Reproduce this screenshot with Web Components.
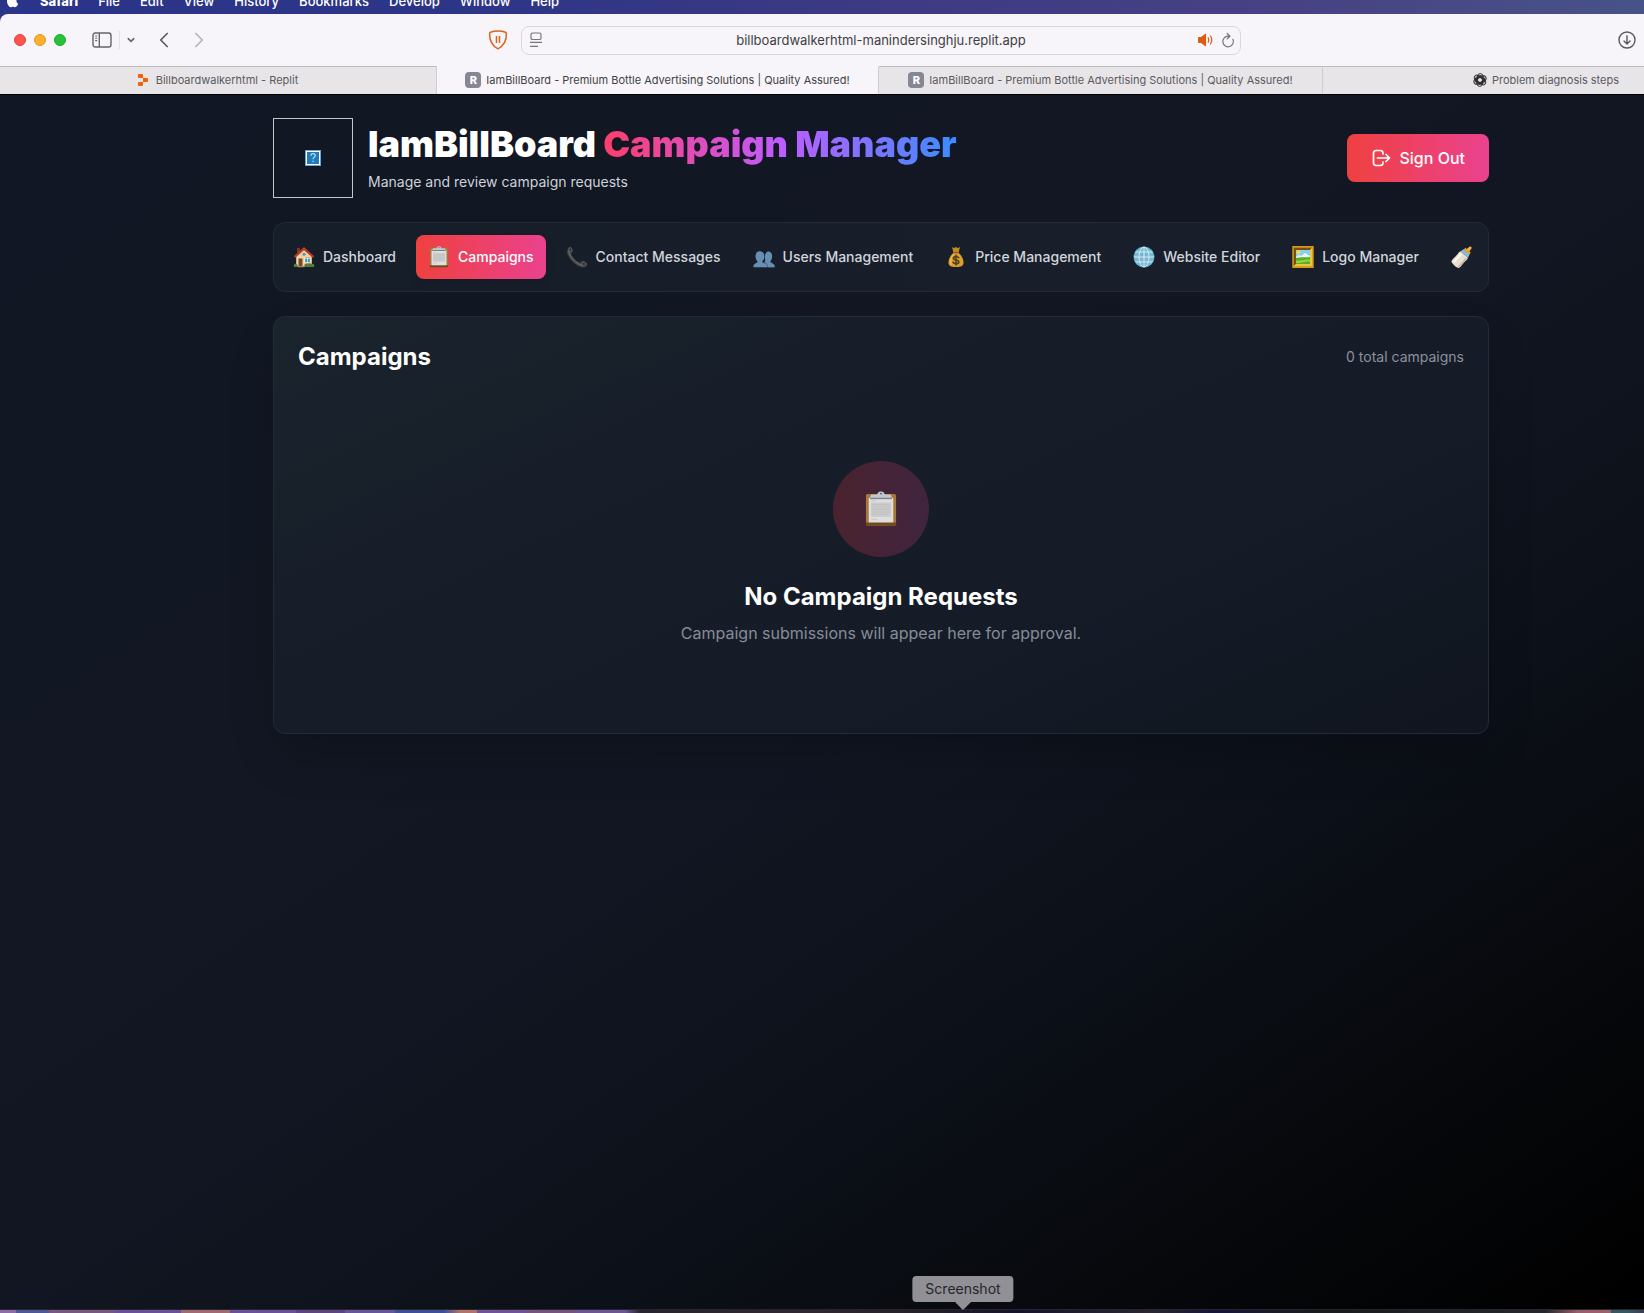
<!DOCTYPE html>
<html lang="en">
<head>
<meta charset="utf-8">
<meta name="viewport" content="width=device-width, initial-scale=1">
<title>IamBillBoard - Campaign Manager</title>
<style>
  html, body { margin: 0; height: 100%; background: #000; }
  body { font-family: Inter, "Liberation Sans", sans-serif; overflow: hidden; }
</style>
</head>
<body>
<desktop-screen></desktop-screen>
<script>
const ICONS = {
  apple: ['0 0 14 17', `<path fill="#fff" d="M10 1c0 1.600-1.200 2.800-2.600 2.800C7.300 2.300 8.600 1.100 10 1zM12.200 11.800c-.7 1.800-1.900 3.400-3.200 3.400-.8 0-1.200-.5-2.100-.5s-1.300.5-2.100.5C3 15.200 1 12 1 9c0-2.700 1.600-4.300 3.300-4.300 1 0 1.800.6 2.500.6.600 0 1.500-.7 2.700-.7 1 0 1.900.5 2.500 1.300-2.300 1.400-1.900 4.700.2 5.900z"/>`],
  sidebar: ['0 0 20 16', `<g fill="none" stroke="#656469" stroke-width="1.400"><rect x="1" y="1" width="18" height="14" rx="2.200"/><path d="M7.300 1v14"/><path stroke-width="1.100" d="M3.200 4h2M3.200 6.300h2M3.200 8.600h2"/></g>`],
  down: ['0 0 8 8', `<path fill="none" stroke="#656469" stroke-width="1.600" stroke-linecap="round" stroke-linejoin="round" d="M1.200 2.700 4 5.400l2.800-2.700"/>`],
  back: ['0 0 10 16', `<path fill="none" stroke="#59585d" stroke-width="1.700" stroke-linecap="round" stroke-linejoin="round" d="M8.200 1.500 1.700 8l6.500 6.500"/>`],
  forward: ['0 0 10 16', `<path fill="none" stroke="#b5b3b8" stroke-width="1.700" stroke-linecap="round" stroke-linejoin="round" d="M1.800 1.500 8.300 8l-6.500 6.500"/>`],
  shield: ['0 0 20 20', `<path fill="none" stroke="#dd6322" stroke-width="1.500" stroke-linejoin="round" d="M10 1c3 0 5.500.4 7.500 1.200.6.200.9.700.9 1.300.2 6.500-2.700 12.300-8.400 15.300C4.300 15.800 1.400 10 1.600 3.500c0-.6.300-1.100.9-1.300C4.500 1.400 7 1 10 1z"/><path stroke="#dd6322" stroke-width="1.500" d="M8.500 6v7M11.500 6v7"/>`],
  reader: ['0 0 12 16', `<g fill="none" stroke="#77767b" stroke-width="1.200"><rect x="1" y="1" width="10" height="6.500" rx="1.600"/><path d="M0 10.300h12M0 14.300h8"/></g>`],
  sound: ['0 0 16 14', `<path fill="#dc5b12" d="M0 4.800c0-.5.300-.8.800-.8h2.400L7 .9c.5-.4 1.100-.2 1.100.5v11.200c0 .7-.6.900-1.100.5L3.200 10H.8c-.5 0-.8-.3-.8-.8z"/><path fill="none" stroke="#dc5b12" stroke-width="1.200" stroke-linecap="round" d="M10.200 4.700c.8 1.400.8 3.200 0 4.600M12.500 3c1.600 2.400 1.600 5.600 0 8"/>`],
  reload: ['0 0 12 16', `<path fill="none" stroke="#77767b" stroke-width="1.200" stroke-linecap="round" stroke-linejoin="round" d="M10.900 7.200A5.300 5.300 0 1 1 6 4.200h1.500M5.200 1.500 8 4.200 5.200 6.800"/>`],
  download: ['0 0 18 18', `<g fill="none" stroke="#59585d" stroke-width="1.400" stroke-linecap="round" stroke-linejoin="round"><circle cx="9" cy="9" r="8"/><path d="M9 4.800v8M6 10l3 3 3-3"/></g>`],
  replit: ['0 0 10 12', `<path fill="#f26207" d="M.8 0h3.400c.5 0 .8.300.8.800V4H.8C.3 4 0 3.700 0 3.200V.8C0 .3.300 0 .8 0zM5 4h4.200c.5 0 .8.300.8.800v2.400c0 .5-.3.800-.8.800H5zM.8 8H5v3.200c0 .5-.3.800-.8.800H.8c-.5 0-.8-.3-.8-.8V8.800C0 8.300.300 8 .8 8z"/>`],
  openai: ['0 0 24 24', `<g fill="none" stroke="#2e2e30" stroke-width="1.700"><rect x="8" y="1" width="9" height="19" rx="4.500"/><rect x="8" y="1" width="9" height="19" rx="4.500" transform="rotate(60 12 12)"/><rect x="8" y="1" width="9" height="19" rx="4.500" transform="rotate(120 12 12)"/><rect x="8" y="1" width="9" height="19" rx="4.500" transform="rotate(180 12 12)"/><rect x="8" y="1" width="9" height="19" rx="4.500" transform="rotate(240 12 12)"/><rect x="8" y="1" width="9" height="19" rx="4.500" transform="rotate(300 12 12)"/></g>`],
  signout: ['0 0 20 20', `<path fill="none" stroke="#fff" stroke-width="1.700" stroke-linecap="round" stroke-linejoin="round" d="M12 6V5.200A2.700 2.700 0 0 0 9.300 2.500H5.200a2.700 2.700 0 0 0-2.700 2.700v9.600a2.700 2.700 0 0 0 2.700 2.700h4.100a2.700 2.700 0 0 0 2.700-2.700V14M6.500 10h12M15 6.500l3.500 3.500-3.500 3.500"/>`],
  house: ['0 0 22 22', `<path fill="#8b2e22" d="M4 2h3v5H4z"/><path fill="#eed4a2" d="M3.200 10.200 11 3l7.800 7.200V20H3.200z"/><path fill="#d9b67d" d="M12 11h6.800v9H12z"/><path fill="#b93c28" d="M11 1 .8 10.300l1.500 1.500L11 4.200l8.700 7.600 1.500-1.500z"/><path fill="#7a4728" d="M5.500 12.500h4V20h-4z"/><path fill="#fff" d="M11.500 12h6v4.800h-6z"/><path fill="#4a93c8" d="M12.100 12.600h2.100v3.600h-2.100zM14.800 12.600h2.100v3.600h-2.100z"/><circle cx="11" cy="8.300" r="1.500" fill="#5590b6"/><path fill="#587d32" d="M1 18.200c1-.8 2.300-.7 3.300.3L4.600 21H.8zM11.500 18.300c2.500-1 7-1 9.700 0V21h-9.700z"/><path fill="#a08c72" d="M4.600 20h7v1.200h-7z"/>`],
  clipboard: ['0 0 22 22', `<rect x="1.800" y="1.800" width="18.400" height="19.400" rx="1" fill="#a8783b"/><path fill="#6f4a20" d="M1.800 19.300h18.400v1c0 .5-.4.900-.9.900H2.700c-.5 0-.9-.4-.9-.9z"/><path fill="#dedede" d="M3.500 4.200h15v15h-15z"/><path fill="#cbcbcb" d="M5 7h12v8.800H5z"/><path stroke="#bcbcbc" stroke-width=".4" d="M5 6h3M5 8.300h11.500M5 9.800h12M5 11.300h11.500M5 12.800h12M5 14.300h10M5 17.300h4"/><path fill="#808385" d="M4.300 3.500h13.400v1.500H4.300z"/><path fill="#bfc8ce" d="M5 2.200h3.500C9 1.800 9 .3 11 .3s2 1.500 2.500 1.900H17l.8 1.900H4.200z"/><circle cx="11" cy="1.600" r=".6" fill="#586069"/>`],
  phone: ['0 0 22 22', `<path fill="#414346" d="M1.400 3.500C2 2 3.200.7 4.400.8c1.300.3 2.700 3.700 2.400 4.900-.2 1-1.700 1.200-1.700 2 .6 3 5.600 8 8.700 8.700.8.200 1.500-1.500 2.800-1.600 1.400 0 4.700 2 4.800 3.500 0 1.600-2.500 3.400-4.500 3.200C10 20.700 1.500 12 1 6z"/><path fill="none" stroke="#76787a" stroke-width=".9" d="M2.600 4.500C3 10 10.200 18.600 17 19.500"/><circle cx="4.300" cy="3.500" r="1.500" fill="#252729" stroke="#777" stroke-width=".6"/><ellipse cx="17.800" cy="18" rx="2" ry="1.400" fill="#252729" stroke="#777" stroke-width=".6"/>`],
  users: ['0 0 22 22', `<path fill="#3e6180" d="M14.800 5.500c2.700 0 4.300 2 4.200 5-.1 2.200-.8 3.800-1.900 4.900.3 1.600 3.900 1.600 4.400 4.200l.1 1.600H9.500z"/><path fill="#668fb2" d="M6.900 5.300c2.800 0 4.500 2.100 4.400 5.100-.1 2.200-.9 4-2.100 5 .2 1.800 4.400 1.600 4.900 4.300l.1 1.500H.4l.1-1.500c.4-2.600 4-2.500 4.200-4.300-1.200-1-2.100-2.800-2.200-5-.1-3 1.600-5.100 4.400-5.100z"/><path fill="#668fb2" d="M15.500 5.500c2.400.3 3.700 2.300 3.600 5-.1 2.200-.8 3.800-2 4.900.3 1.600 3.900 1.600 4.400 4.200l.1 1.600h-6.600c-.2-3-1.400-4.200-3.300-4.700l1-1.600c-1.200-1.400-1.300-5.800.2-7.900.6-.9 1.500-1.500 2.600-1.500z"/>`],
  money: ['0 0 22 22', `<path fill="#c68922" d="M7 1.200 9.200 2l1.600-1 1.700 1L15 1.200l-1.500 5.500h-5z"/><path fill="#db9f2d" d="M8.500 6.700h5c2.900 2.300 5 6.200 5 9.800 0 3.200-1.900 4.500-7.500 4.500s-7.500-1.300-7.500-4.500c0-3.600 2.100-7.500 5-9.800z"/><path fill="#efc459" d="M9 7.500c-2 2-4 5-4 8.200 0 2 .7 3 1.800 3.500C5.500 15 7 10 9.700 7.500z"/><path stroke="#8b5b17" stroke-width="1.300" d="M8 6.700h6"/><path fill="none" stroke="#54401e" stroke-width="1.600" stroke-linecap="round" d="M13.600 11.700c-.6-1-1.500-1.200-2.600-1.200-1.500 0-2.600.6-2.600 1.700 0 2.500 5.400 1.200 5.400 3.700 0 1.200-1.200 1.800-2.800 1.800-1.300 0-2.500-.4-3-1.500M11 9.200v9.800"/>`],
  globe: ['0 0 22 22', `<circle cx="11" cy="11" r="10.500" fill="#4aa3c8"/><circle cx="11" cy="11" r="10" fill="#76b8d2"/><g fill="none" stroke="#d3eaf2" stroke-width="1"><ellipse cx="11" cy="11" rx="5" ry="10"/><path d="M11 1v20M1 11h20M2.500 6h17M2.500 16h17"/></g>`],
  frame: ['0 0 22 22', `<path fill="#d59b1d" d="M.3 0h21.400v22H.3z"/><path fill="#78500c" d="M1.800 1.800h18.400L18 4H4v14l-2.200 2z"/><path fill="#efc63b" d="M20.200 1.800V20H1.800L4 18h14V4z"/><path fill="#8bcff0" d="M4 4h14v14H4z"/><path fill="#e7f4f9" d="m4 11 3-2 2 1 4-3 5 3v3H4z"/><circle cx="6.500" cy="6.300" r="2" fill="#f5db45"/><path fill="#59af22" d="M4 12c5-1.500 9 0 14-1v7H4z"/><path fill="#91d844" d="M4 14.500c5 1 9-2 14-.8v2C12 15 9 18 4 16.800z"/>`],
  bottle: ['0 0 22 22', `<g transform="rotate(42 11 11)"><path fill="#efb13a" d="M9.800-2.500h2.400l.8 5H9z"/><path fill="#e5a02e" d="M7.300 2h7.400v2.500H7.300z"/><path fill="#8bbbd2" d="M7 4.200h8l1 3.500H6z"/><path fill="#e8dfd1" d="M6 7.700h10c1 3-.2 4 .2 7 .1 2.300.6 4-.2 6.500-.5 1.500-9.500 1.500-10 0-.8-2.500-.3-4.200-.2-6.500.4-3-.8-4 .2-7z"/><path fill="#fff8ed" d="M7.200 9h2.300v11H7.200z"/><path fill="#bfb5a8" d="M14.300 9h1.500l.2 12h-1.700z"/></g>`],
  missing: ['0 0 16 16', `<path fill="#6fa3d3" d="M0 0h16v16H0z"/><path fill="#fff" d="M1 1h14v14H1z"/><path fill="#207bb9" d="M2 2h12v12H2z"/><path fill="none" stroke="#c9e3f5" stroke-width="1.200" d="M5.900 5.800c0-3 4.300-3 4.300-.3 0 1.700-2.100 1.600-2.100 3.700M8.100 10.700V12"/>`]
};

const define = (name, css, html, after) => {
  const template = document.createElement('template');
  template.innerHTML = `<style>*{box-sizing:border-box}button,input{font:inherit;color:inherit;border:0;margin:0;padding:0;background:none;outline:0}:host{display:block;box-sizing:border-box}${css}</style>${html}`;
  customElements.define(name, class extends HTMLElement {
    connectedCallback() {
      if (this.shadowRoot) return;
      this.attachShadow({ mode: 'open' }).append(template.content.cloneNode(true));
      if (after) after(this, this.shadowRoot);
    }
  });
};

define('ui-icon', `:host{display:block;flex:none;width:22px;height:22px}svg{display:block;width:100%;height:100%;overflow:visible}`, '', (el, root) => {
  const [box, art] = ICONS[el.getAttribute('name')];
  root.innerHTML += `<svg viewBox="${box}" aria-hidden="true">${art}</svg>`;
});

define('menu-bar', `
  :host{height:14px;overflow:hidden;background:linear-gradient(90deg,#2a3488 0,#2d3587 28%,#3e3a83 55%,#484184 78%,#475387 100%)}
  nav{height:14px;display:flex;align-items:flex-end;gap:20px;padding:0 6px 5px;color:#fff;font-size:13px;line-height:16px;font-weight:500}
  ui-icon{width:14px;height:17px}
  button{flex:none}
  .app{font-weight:800}`,
  `<nav aria-label="Menu bar"><ui-icon name="apple"></ui-icon><button class="app">Safari</button><button>File</button><button>Edit</button><button>View</button><button>History</button><button>Bookmarks</button><button>Develop</button><button>Window</button><button>Help</button></nav>`);

define('browser-toolbar', `
  :host{height:52px;background:#f7f5f9;border-top-left-radius:8px;display:grid;grid-template-columns:1fr 720px 1fr;align-items:center}
  .left,.right,button{display:flex;align-items:center}
  .left{padding:0 13px 0 14px}
  .lights{display:flex;gap:8px;margin-right:26px}
  .lights i{width:12px;height:12px;border-radius:50%;background:#fe5450;border:1px solid #e0443e}
  .lights i:nth-child(2){background:#fdb02c;border-color:#e09c22}
  .lights i:nth-child(3){background:#27c23a;border-color:#1cab2c}
  .side ui-icon{width:20px;height:16px}
  .more{border-left:1px solid #e3e1e6;margin-left:7px;padding-left:7px;height:18px}
  .more ui-icon{width:8px;height:8px}
  .nav{margin-left:24px}
  .nav ui-icon{width:10px;height:16px}
  .nav+.nav{margin-left:25px}
  .shield{margin-left:auto}
  .shield ui-icon{width:20px;height:20px}
  .address{height:29px;display:flex;align-items:center;gap:8px;padding:0 6px 0 8px;border:1px solid #dad8dd;border-radius:8px}
  .address ui-icon{width:12px;height:16px}
  .address .sound{width:16px;height:14px}
  input{flex:1;min-width:0;text-align:center;font-size:13px;line-height:20px;color:#3f3e42;padding-left:22px}
  .right{justify-content:flex-end;padding-right:126px}
  .right ui-icon{width:18px;height:18px}`,
  `<div class="left"><div class="lights"><i></i><i></i><i></i></div>
   <button class="side" aria-label="Sidebar"><ui-icon name="sidebar"></ui-icon></button><button class="more" aria-label="Tab groups"><ui-icon name="down"></ui-icon></button>
   <button class="nav" aria-label="Back"><ui-icon name="back"></ui-icon></button><button class="nav" aria-label="Forward"><ui-icon name="forward"></ui-icon></button>
   <button class="shield" aria-label="Content blocker"><ui-icon name="shield"></ui-icon></button></div>
   <div class="address"><ui-icon name="reader"></ui-icon><input type="text" aria-label="Address" value="billboardwalkerhtml-manindersinghju.replit.app"><button aria-label="Mute tab"><ui-icon class="sound" name="sound"></ui-icon></button><button aria-label="Reload"><ui-icon name="reload"></ui-icon></button></div>
   <div class="right"><button aria-label="Downloads"><ui-icon name="download"></ui-icon></button></div>`);

define('browser-tab', `
  :host{min-width:0;background:#e8e5e9;border-top:1px solid #bebcc1;border-right:1px solid #d0ced3}
  :host([active]){background:#f7f5f9;border-top-color:#f7f5f9}
  :host(:last-child){padding-left:8px}
  button{width:100%;height:25px;display:flex;align-items:center;justify-content:center;gap:5px;font-size:11px;line-height:16px;color:#5b5a5e;white-space:nowrap}
  :host([active]) button{color:#3f3e42}`,
  `<button role="tab"><slot name="icon"></slot><span><slot></slot></span></button>`);

define('site-letter', `:host{width:16px;height:16px;border-radius:4px;background:#868694;color:#fff;font-size:11px;line-height:17px;font-weight:800;text-align:center}`, `<slot></slot>`);

define('browser-tabs', `
  :host{height:29px;display:grid;grid-template-columns:437fr 442fr 444fr 439fr;border-bottom:1px solid #000;background:#e8e5e9}
  .replit{width:10px;height:12px;margin-right:3px}
  .chat{width:14px;height:14px}`,
  `<browser-tab><ui-icon slot="icon" class="replit" name="replit"></ui-icon>Billboardwalkerhtml - Replit</browser-tab>
   <browser-tab active><site-letter slot="icon">R</site-letter>IamBillBoard - Premium Bottle Advertising Solutions | Quality Assured!</browser-tab>
   <browser-tab><site-letter slot="icon">R</site-letter>IamBillBoard - Premium Bottle Advertising Solutions | Quality Assured!</browser-tab>
   <browser-tab><ui-icon slot="icon" class="chat" name="openai"></ui-icon>Problem diagnosis steps</browser-tab>`);

define('campaign-header', `
  :host{display:flex;align-items:center;justify-content:space-between}
  .brand{display:flex;align-items:center;gap:15px}
  .logo{width:80px;height:80px;border:1px solid #c5c6c8;display:grid;place-items:center}
  .logo ui-icon{width:16px;height:16px}
  h1{margin:0;font-size:36px;line-height:40px;font-weight:900;color:#fff}
  h1 span{background:linear-gradient(90deg,#ff3d6c,#c05cff 50%,#3b8cff);-webkit-background-clip:text;background-clip:text;color:transparent}
  p{margin:8px 0 0;font-size:14px;line-height:20px;color:#cdd1d8}
  button{display:flex;align-items:center;gap:8px;height:48px;padding:0 24px;border-radius:8px;background:linear-gradient(90deg,#ef4040,#ea428f);color:#fff;font-size:16px;line-height:24px;font-weight:500}
  button ui-icon{width:20px;height:20px}`,
  `<div class="brand"><div class="logo"><ui-icon name="missing"></ui-icon></div><div><h1>IamBillBoard <span>Campaign Manager</span></h1><p>Manage and review campaign requests</p></div></div>
   <button><ui-icon name="signout"></ui-icon>Sign Out</button>`);

define('nav-item', `
  :host{flex:none}
  button{display:flex;align-items:center;gap:8px;height:44px;padding:0 12px;border-radius:8px;color:#d1d5dc;font-size:14px;line-height:20px;font-weight:500;white-space:nowrap}
  :host([active]) button{color:#fff;background:linear-gradient(90deg,#ef4040,#ea428f);box-shadow:0 4px 8px rgba(0,0,0,.12)}
  ui-icon{width:22px;height:22px}`,
  `<button><slot></slot></button>`,
  (el, root) => {
    const button = root.querySelector('button');
    button.setAttribute('aria-label', el.getAttribute('label') || el.textContent);
    const icon = document.createElement('ui-icon');
    icon.setAttribute('name', el.getAttribute('icon'));
    button.prepend(icon);
  });

define('admin-nav', `
  :host{border:1px solid #222a35;border-radius:12px;background:linear-gradient(90deg,#161e2a,#191f2a);overflow:hidden;padding:12px 7px}
  nav{display:flex;gap:8px}`,
  `<nav aria-label="Administration"><nav-item icon="house">Dashboard</nav-item><nav-item icon="clipboard" active>Campaigns</nav-item><nav-item icon="phone">Contact Messages</nav-item><nav-item icon="users">Users Management</nav-item><nav-item icon="money">Price Management</nav-item><nav-item icon="globe">Website Editor</nav-item><nav-item icon="frame">Logo Manager</nav-item><nav-item icon="bottle" label="Bottles"></nav-item></nav>`);

define('empty-state', `
  :host{display:flex;flex-direction:column;align-items:center;padding:64px 0;text-align:center}
  .disc{width:96px;height:96px;border-radius:50%;display:grid;place-items:center;background:linear-gradient(90deg,#49232e,#40243f);margin-bottom:24px}
  .disc ui-icon{width:36px;height:36px}
  h3{margin:0 0 8px;font-size:24px;line-height:32px;font-weight:700;color:#fff}
  p{margin:0;font-size:16px;line-height:24px;color:#868c98}`,
  `<div class="disc"><ui-icon name="clipboard"></ui-icon></div><h3><slot name="title"></slot></h3><p><slot></slot></p>`);

define('campaign-panel', `
  :host{border:1px solid #232b36;border-radius:12px;padding:24px;background:linear-gradient(155deg,#1a242d 0,#171e29 30%,#151c27 65%,#10151f 100%);box-shadow:0 24px 48px -12px rgba(0,0,0,.25)}
  header{display:flex;align-items:center;justify-content:space-between;margin-bottom:24px}
  h2{margin:0;font-size:24px;line-height:32px;font-weight:700;color:#fff}
  header span{font-size:14px;line-height:20px;color:#8b919d}`,
  `<header><h2>Campaigns</h2><span>0 total campaigns</span></header>
   <empty-state><span slot="title">No Campaign Requests</span>Campaign submissions will appear here for approval.</empty-state>`);

define('admin-page', `
  :host{flex:1;background:linear-gradient(to bottom right,#111724 0,#121723 35%,#111622 50%,#0c1018 67%,#07090d 80%,#040507 87%,#000 96%)}
  main{max-width:1280px;margin:0 auto;padding:23px 32px;display:flex;flex-direction:column;gap:24px}`,
  `<main><campaign-header></campaign-header><admin-nav></admin-nav><campaign-panel></campaign-panel></main>`);

define('dock-edge', `
  :host{position:relative;height:4px;border-top:1px solid #25262d;background:linear-gradient(90deg,#8d6aa8 0 1%,#4d5796 1% 3%,#775780 3% 7%,#6a5096 7% 11%,#a06a70 11% 14%,#6a5096 14% 18%,#5d4480 18% 21%,#67559a 21% 24%,#3e4f94 24% 27%,#b07568 28% 29%,#6f5299 29% 32%,#76527c 32% 35%,#6d5594 35% 38%,#26222b 39%,#33272f 48%,#242029 56%,#17122c 62%,#2b2630 70%,#14133a 74%,#1b1b2a 77%,#191a1e 80%,#26272c 94%,#9a5f6b 96% 98%,#345760 98% 99%,#3b3c53 100%)}
  .tip{position:absolute;left:963px;bottom:11px;transform:translateX(-50%);padding:3px 13px;border-radius:4px;background:#919096;color:#252529;font-size:14px;line-height:20px}
  .tip::after{content:"";position:absolute;left:50%;top:100%;margin-left:-8px;width:16px;height:8px;background:#919096;clip-path:polygon(0 0,100% 0,60% 80%,50% 100%,40% 80%)}`,
  `<div class="tip" role="tooltip">Screenshot</div>`);

define('desktop-screen', `
  :host{height:100vh;display:flex;flex-direction:column;overflow:hidden;background:#2d3587}
  .window{flex:1;display:flex;flex-direction:column;margin-right:-118px}`,
  `<menu-bar></menu-bar><div class="window"><browser-toolbar></browser-toolbar><browser-tabs></browser-tabs><admin-page></admin-page></div><dock-edge></dock-edge>`);
</script>
</body>
</html>
